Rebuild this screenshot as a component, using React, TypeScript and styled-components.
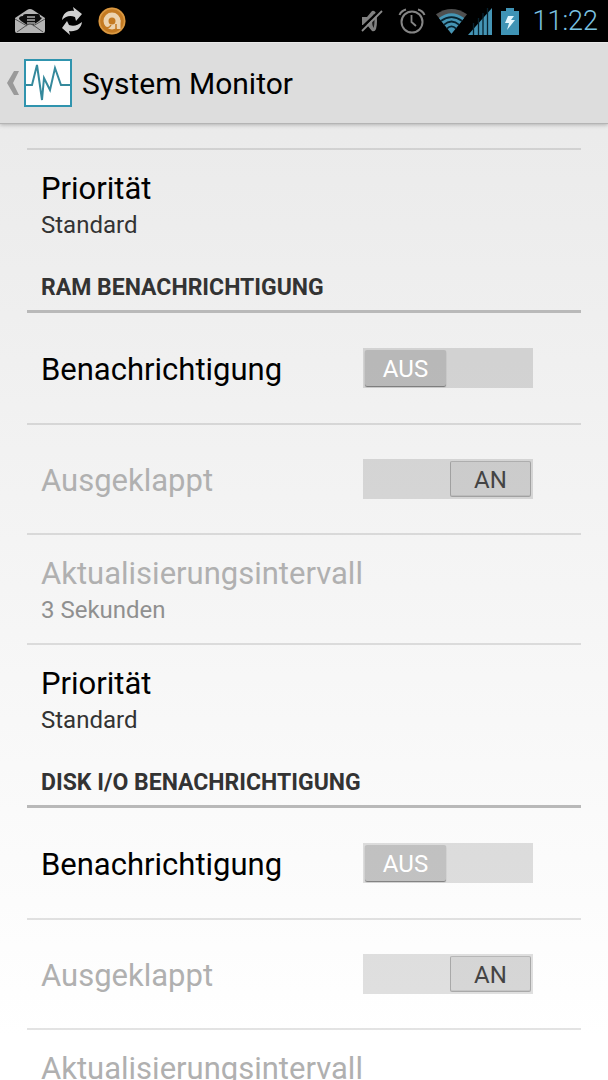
import React, { useId, useState } from "react";
import styled, { createGlobalStyle } from "styled-components";

const GlobalStyle = createGlobalStyle`
  * { box-sizing: border-box; }
  body {
    margin: 0;
    background: #f3f3f3;
    font-family: Roboto, "Liberation Sans", sans-serif;
  }
`;

const Screen = styled.div`
  display: flex;
  flex-direction: column;
  height: 100vh;
  overflow: hidden;
  background: linear-gradient(#e8e8e8, #ffffff 96%);
`;

const StatusBar = styled.div`
  display: flex;
  flex: none;
  align-items: center;
  justify-content: space-between;
  height: 42px;
  padding: 0 10px 0 14px;
  background: #000000;
`;

const IconGroup = styled.div<{ $gap: number }>`
  display: flex;
  align-items: center;
  gap: ${(p) => p.$gap}px;
  svg { display: block; flex: none; }
`;

const Clock = styled.time`
  margin-left: 4px;
  color: #7cc3e0;
  font-size: 27px;
  font-weight: 300;
  line-height: 32px;
`;

const ActionBar = styled.header`
  display: flex;
  flex: none;
  align-items: center;
  height: 82px;
  padding: 0 6px;
  background: #dddddd;
  border-top: 1px solid #e9e9e9;
  border-bottom: 1px solid #b4b4b4;
  box-shadow: 0 1px 4px rgba(0, 0, 0, 0.25);
  z-index: 1;
`;

const UpButton = styled.button`
  display: flex;
  align-items: center;
  gap: 4px;
  padding: 0;
  border: 0;
  background: none;
  svg { display: block; }
`;

const Title = styled.h1`
  margin: 0 0 0 10px;
  padding-top: 2px;
  color: #000000;
  font-size: 30px;
  font-weight: 400;
  line-height: 40px;
`;

const Scroller = styled.main`
  flex: 1;
  min-height: 0;
  overflow-y: auto;
  scrollbar-width: none;
  padding: 24px 27px 0;
`;

const SectionTitle = styled.h2`
  display: flex;
  align-items: center;
  height: 55px;
  margin: 0;
  padding: 8px 14px 0;
  border-bottom: 3px solid #b9b9b9;
  color: #333333;
  font-size: 23px;
  font-weight: 700;
  line-height: 28px;
`;

const Row = styled.div<{ $divided?: boolean }>`
  display: flex;
  align-items: center;
  justify-content: space-between;
  height: 110px;
  padding: 0 48px 0 14px;
  border-top: ${(p) => (p.$divided ? "2px solid rgba(0, 0, 0, 0.11)" : "0")};
`;

const TextRow = styled.button`
  display: flex;
  flex-direction: column;
  justify-content: center;
  width: 100%;
  height: 110px;
  padding: 4px 14px 0;
  border: 0;
  border-top: 2px solid rgba(0, 0, 0, 0.11);
  background: none;
  font-family: inherit;
  text-align: left;
`;

const RowTitle = styled.span<{ $dim?: boolean }>`
  color: ${(p) => (p.$dim ? "#b0b0b0" : "#000000")};
  font-size: 31px;
  line-height: 38px;
`;

const RowLabel = styled.label<{ $dim?: boolean }>`
  padding-top: 4px;
  color: ${(p) => (p.$dim ? "#b0b0b0" : "#000000")};
  font-size: 31px;
  line-height: 38px;
`;

const Summary = styled.span<{ $dim?: boolean }>`
  color: ${(p) => (p.$dim ? "#909090" : "#333333")};
  font-size: 24px;
  line-height: 34px;
`;

const Track = styled.label<{ $on: boolean }>`
  display: flex;
  flex: none;
  justify-content: ${(p) => (p.$on ? "flex-end" : "flex-start")};
  width: 170px;
  height: 40px;
  padding: 2px;
  background: rgba(0, 0, 0, 0.12);
`;

const SwitchInput = styled.input`
  width: 1px;
  height: 1px;
  margin: 0 -1px 0 0;
  appearance: none;
  opacity: 0;
`;

const Thumb = styled.span<{ $on: boolean }>`
  display: flex;
  align-items: center;
  justify-content: center;
  width: 81px;
  height: 36px;
  padding-top: 1px;
  border-radius: 2px;
  font-size: 24px;
  color: ${(p) => (p.$on ? "#444444" : "#ffffff")};
  background: ${(p) => (p.$on ? "rgba(0, 0, 0, 0.04)" : "rgba(0, 0, 0, 0.12)")};
  box-shadow: ${(p) =>
    p.$on
      ? "inset 0 0 0 1px rgba(0, 0, 0, 0.14), inset 0 -1px 0 1px rgba(0, 0, 0, 0.08)"
      : "0 1px 1px rgba(0, 0, 0, 0.45)"};
`;

function SwitchRow({ title, initial, disabled, divided }: {
  title: string; initial: boolean; disabled?: boolean; divided?: boolean;
}) {
  const id = useId();
  const [on, setOn] = useState(initial);
  return (
    <Row $divided={divided}>
      <RowLabel htmlFor={id} $dim={disabled}>{title}</RowLabel>
      <Track htmlFor={id} $on={on}>
        <SwitchInput id={id} type="checkbox" role="switch" checked={on} disabled={disabled}
          onChange={(e) => setOn(e.target.checked)} />
        <Thumb $on={on}>{on ? "AN" : "AUS"}</Thumb>
      </Track>
    </Row>
  );
}

function ChoiceRow({ title, summary, disabled }: { title: string; summary: string; disabled?: boolean }) {
  return (
    <TextRow type="button" disabled={disabled}>
      <RowTitle $dim={disabled}>{title}</RowTitle>
      <Summary $dim={disabled}>{summary}</Summary>
    </TextRow>
  );
}

const MailIcon = () => (
  <svg width="32" height="26" viewBox="0 0 32 26" aria-hidden="true">
    <path d="M1 10 13 2Q16 0 19 2L31 10V23Q31 25 29 25H3Q1 25 1 23Z" fill="#b4b4b4" />
    <path d="M5 11Q5 8 9 8Q9 6 12 6H24Q26 6 26 9L28 10 25 13 19 17Q16 15 13 17L7 13Z" fill="#0c0c0c" />
    <path d="M13 9H21M13 12H21M13 15H21" stroke="#aaa" strokeWidth="1.5" />
    <path d="M1 11 13 18M31 11 19 18M3 24 13 17Q16 15 19 17L29 24" fill="none" stroke="#555" strokeWidth="1" />
  </svg>
);

const SyncIcon = () => (
  <svg width="22" height="28" viewBox="0 0 22 28" aria-hidden="true">
    <path d="M1 13C2 6 7 3 13 4L12 0 21 7 15 14 14 10C9 8 5 9 1 13Z" fill="#cfcfcf" />
    <path d="M21 15C20 22 15 25 8 24L9 28 1 21 6 14 8 18C13 20 17 18 21 15Z" fill="#cfcfcf" />
  </svg>
);

const AvastIcon = () => (
  <svg width="28" height="28" viewBox="0 0 28 28" aria-hidden="true">
    <circle cx="14" cy="14" r="13.5" fill="#c47a22" />
    <circle cx="14" cy="14" r="12.5" fill="none" stroke="#d99a45" strokeWidth="1.5" />
    <circle cx="14" cy="14" r="6" fill="none" stroke="#ecd3b0" strokeWidth="5" />
    <path d="M20.500 13V22" stroke="#ecd3b0" strokeWidth="4" />
    <path d="M18 17V23M7 20Q11 22 13 18" fill="none" stroke="#c47a22" strokeWidth="1.500" />
  </svg>
);

const MuteIcon = () => (
  <svg width="22" height="24" viewBox="0 0 22 24" aria-hidden="true">
    <path d="M1 8H6L11 2Q16 0 16 12Q16 24 11 22L6 16H1Z" fill="#808080" />
    <path d="M12.500 5Q9.500 12 12.500 19Q14.500 12 12.500 5Z" fill="#1a1a1a" />
    <path d="M0 19.500 18 2.500" stroke="#000" strokeWidth="2.500" />
    <path d="M1 22 21 2" stroke="#8c8c8c" strokeWidth="1.800" />
  </svg>
);

const AlarmIcon = () => (
  <svg width="28" height="26" viewBox="0 0 28 26" fill="none" stroke="#858585" aria-hidden="true">
    <circle cx="14" cy="14" r="10.500" strokeWidth="2" />
    <path d="M13.500 7V14L18 18" strokeWidth="1.800" />
    <path d="M1.500 7Q3 3 8 1.500M26.500 7Q25 3 20 1.500" strokeWidth="2" />
  </svg>
);

const WifiIcon = () => (
  <svg width="33" height="27" viewBox="0 0 34 27" aria-hidden="true">
    <path d="M1 6Q17-5 33 6L17 26Z" fill="#4f4f4f" />
    <path d="M4 10Q17 0 30 10L17 26Z" fill="#4595b5" />
    <path d="M6 13Q17 5 28 13M9 17Q17 10 25 17M12 21Q17 16 22 21" fill="none" stroke="#07222e" strokeWidth="1.800" />
  </svg>
);

const SignalIcon = () => (
  <svg width="24" height="27" viewBox="0 0 24 27" aria-hidden="true">
    <path d="M0 27 24 0V27Z" fill="#4595b5" />
    <path d="M5.500 15V27M10.500 10V27M15 5V27M19.500 0V27" stroke="#07222e" strokeWidth="1.300" />
  </svg>
);

const BatteryIcon = () => (
  <svg width="18" height="27" viewBox="0 0 18 27" aria-hidden="true">
    <path d="M5 0H13V3H18V27H0V3H5Z" fill="#3f93b5" />
    <path d="M7 8H13L10 12H14L6 22 8 15H4Z" fill="#e4f7ff" />
  </svg>
);

const BackIcon = () => (
  <svg width="14" height="26" viewBox="0 0 14 26" aria-hidden="true">
    <path d="M8 1H13L7 13 13 25H8L1 13Z" fill="#9a9a9a" />
  </svg>
);

const AppIcon = () => (
  <svg width="48" height="48" viewBox="0 0 48 48" aria-hidden="true">
    <rect x="1" y="1" width="46" height="46" fill="#fff" stroke="#3094ae" strokeWidth="2" />
    <path d="M2 26H8L13 6 18 41 20 19 26 31 31 9 37 26H46" fill="none" stroke="#35899c" strokeWidth="2" />
  </svg>
);

export default function App() {
  return (
    <Screen>
      <GlobalStyle />
      <StatusBar>
        <IconGroup $gap={15}>
          <MailIcon />
          <SyncIcon />
          <AvastIcon />
        </IconGroup>
        <IconGroup $gap={9}>
          <IconGroup $gap={15}>
            <MuteIcon />
            <AlarmIcon />
          </IconGroup>
          <IconGroup $gap={0}>
            <WifiIcon />
            <SignalIcon />
          </IconGroup>
          <BatteryIcon />
          <Clock>11:22</Clock>
        </IconGroup>
      </StatusBar>
      <ActionBar>
        <UpButton type="button" aria-label="Zurück">
          <BackIcon />
          <AppIcon />
        </UpButton>
        <Title>System Monitor</Title>
      </ActionBar>
      <Scroller>
        <ChoiceRow title="Priorität" summary="Standard" />

        <SectionTitle>RAM BENACHRICHTIGUNG</SectionTitle>
        <SwitchRow title="Benachrichtigung" initial={false} />
        <SwitchRow title="Ausgeklappt" initial disabled divided />
        <ChoiceRow title="Aktualisierungsintervall" summary="3 Sekunden" disabled />
        <ChoiceRow title="Priorität" summary="Standard" />

        <SectionTitle>DISK I/O BENACHRICHTIGUNG</SectionTitle>
        <SwitchRow title="Benachrichtigung" initial={false} />
        <SwitchRow title="Ausgeklappt" initial disabled divided />
        <ChoiceRow title="Aktualisierungsintervall" summary="3 Sekunden" disabled />
      </Scroller>
    </Screen>
  );
}
